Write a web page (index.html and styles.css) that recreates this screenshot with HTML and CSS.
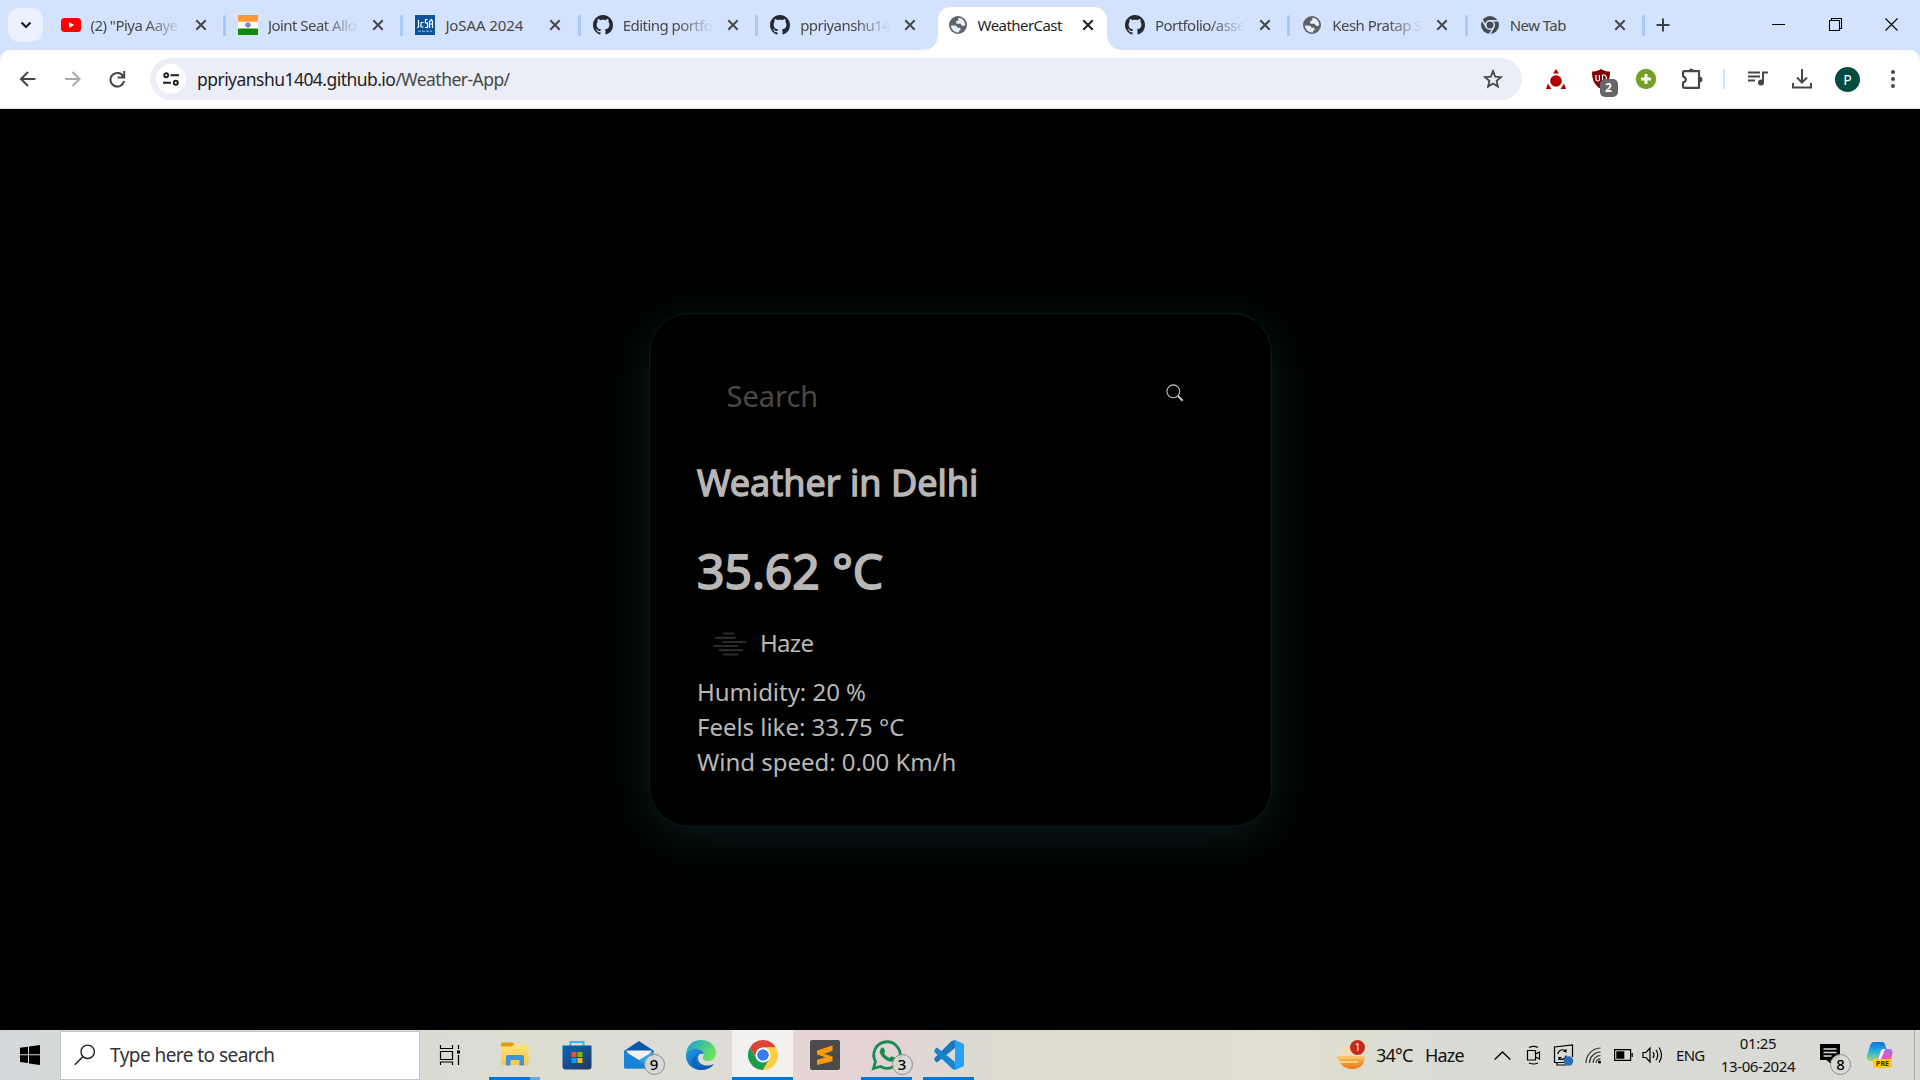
FILE: index.html
```html
<!DOCTYPE html>
<html lang="en">
<head>
<meta charset="utf-8">
<title>WeatherCast</title>
<link rel="stylesheet" href="styles.css">
</head>
<body>
<svg class="defs" width="0" height="0">
  <symbol id="github" viewBox="0 0 16 16"><path d="M8 0C3.58 0 0 3.58 0 8c0 3.54 2.29 6.53 5.47 7.59.4.07.55-.17.55-.38 0-.19-.01-.82-.01-1.49-2.01.37-2.53-.49-2.69-.94-.09-.23-.48-.94-.82-1.13-.28-.15-.68-.52-.01-.53.63-.01 1.08.58 1.23.82.72 1.21 1.87.87 2.33.66.07-.52.28-.87.51-1.07-1.78-.2-3.64-.89-3.64-3.95 0-.87.31-1.59.82-2.15-.08-.2-.36-1.02.08-2.12 0 0 .67-.21 2.2.82.64-.18 1.32-.27 2-.27s1.36.09 2 .27c1.53-1.04 2.2-.82 2.2-.82.44 1.1.16 1.92.08 2.12.51.56.82 1.27.82 2.15 0 3.07-1.87 3.75-3.65 3.95.29.25.54.73.54 1.48 0 1.07-.01 1.93-.01 2.2 0 .21.15.46.55.38A8.01 8.01 0 0 0 16 8c0-4.42-3.58-8-8-8z" fill="#24292f"/></symbol>
  <symbol id="globe" viewBox="0 0 20 20"><circle cx="10" cy="10" r="9" fill="#5f6368"/><path d="M2.800 10.400h3.700q2.700 0 3 2.300h2.300q.7 0 .7 1v1.500q-1.600.2-1.600 1.400v.8A7.300 7.300 0 0 1 2.800 10.400zM10.300 2.800a7.300 7.300 0 0 1 7 7.300q-1.300 1.200-2.900.7-1.600-.7-1.700-2.100H9.600q-1.600 0-1.600-1.500 0-1.400 1.500-1.400.8 0 .8-1z" fill="#e9effa"/></symbol>
  <symbol id="x" viewBox="0 0 12 12"><path d="M1.300 1.300 10.700 10.700M10.700 1.300 1.300 10.700" stroke="currentColor" stroke-width="2" fill="none"/></symbol>
</svg>

<header class="tabstrip">
  <div class="tab-search"><svg width="12" height="8" viewBox="0 0 12 8"><path d="M1.500 1.500 6 6l4.500-4.500" fill="none" stroke="#1f1f1f" stroke-width="2.200"/></svg></div>
  <div class="tabs">
    <div class="tab"><svg class="fav" viewBox="0 0 20 20"><rect y="3" width="20" height="14" rx="3.500" fill="#f00"/><path d="M8 7v6l5.200-3z" fill="#fff"/></svg><span class="title fade">(2) "Piya Aaye</span><svg class="close"><use href="#x"/></svg></div>
    <div class="tab"><svg class="fav" viewBox="0 0 20 20"><path fill="#fff" d="M0 0h20v20H0z"/><path fill="#f93" d="M0 0h20v6.700H0z"/><path fill="#128807" d="M0 13.500h20V20H0z"/><circle cx="10" cy="10" r="2.300" fill="#8b8bd0" stroke="#5c5cb8" stroke-width=".6"/></svg><span class="title fade">Joint Seat Allo</span><svg class="close"><use href="#x"/></svg></div>
    <div class="tab"><svg class="fav" viewBox="0 0 20 20"><path fill="#0f5499" d="M0 0h20v20H0z"/><path d="M3.500 5v7M2 12.500h1.500M6 7.500h2.500M6 7.500v4.500h2.500M12.500 4.500h-2v3.500h2v4.500h-2.500M14.500 13V6.500l2-2 1 2V13M14.500 9h3" fill="none" stroke="#fff" stroke-width="1.200"/><path d="M3 16.200h14" stroke="#9dbfe0" stroke-dasharray="3 1"/></svg><span class="title wide">JoSAA 2024</span><svg class="close"><use href="#x"/></svg></div>
    <div class="tab"><svg class="fav"><use href="#github"/></svg><span class="title fade">Editing portfo</span><svg class="close"><use href="#x"/></svg></div>
    <div class="tab no-sep"><svg class="fav"><use href="#github"/></svg><span class="title fade">ppriyanshu14</span><svg class="close"><use href="#x"/></svg></div>
    <div class="tab active no-sep"><svg class="fav"><use href="#globe"/></svg><span class="title">WeatherCast</span><svg class="close"><use href="#x"/></svg></div>
    <div class="tab"><svg class="fav"><use href="#github"/></svg><span class="title fade">Portfolio/asse</span><svg class="close"><use href="#x"/></svg></div>
    <div class="tab"><svg class="fav"><use href="#globe"/></svg><span class="title fade">Kesh Pratap S</span><svg class="close"><use href="#x"/></svg></div>
    <div class="tab"><svg class="fav" viewBox="0 0 20 20"><circle cx="10" cy="10" r="9" fill="#474b4f"/><circle cx="10" cy="10" r="4.300" fill="none" stroke="#d3e3fd" stroke-width="1.600"/><path d="M10 5.700h8.500M6.300 12.200 2 4.800M13.700 12.200 9.500 19.500" stroke="#d3e3fd" stroke-width="1.600"/></svg><span class="title">New Tab</span><svg class="close"><use href="#x"/></svg></div>
  </div>
  <svg class="new-tab" width="14" height="14" viewBox="0 0 14 14"><path d="M7 .5v13M.5 7h13" stroke="#3c4043" stroke-width="2"/></svg>
  <div class="window-controls">
    <svg width="14" height="14" viewBox="0 0 14 14"><path d="M0 6.500h13" stroke="#000"/></svg>
    <svg width="14" height="14" viewBox="0 0 14 14"><path d="M.5 2.500h10v10H.5zM2.500 2.500v-2h10v10h-2" fill="none" stroke="#000" stroke-width="1.100"/></svg>
    <svg width="14" height="14" viewBox="0 0 14 14"><path d="M.5.5l12 12M12.500.5l-12 12" stroke="#000" stroke-width="1.100"/></svg>
  </div>
</header>

<nav class="toolbar">
  <svg class="nav-btn" viewBox="0 0 20 20"><path d="M17.500 10H3.500M10 3 3 10l7 7" fill="none" stroke="#474747" stroke-width="2"/></svg>
  <svg class="nav-btn" viewBox="0 0 20 20"><path d="M2 10h14M9.500 3l7 7-7 7" fill="none" stroke="#a9a9a9" stroke-width="2"/></svg>
  <svg class="nav-btn" viewBox="0 0 20 20"><path d="M15.500 8A6.800 6.800 0 1 0 16 11.800M16.200 2v6.500h-6.500" fill="none" stroke="#474747" stroke-width="2"/></svg>
  <div class="omnibox">
    <span class="site-info"><svg width="16" height="14" viewBox="0 0 16 14"><g fill="none" stroke="#1f1f1f" stroke-width="1.900"><circle cx="3.200" cy="3.300" r="2"/><circle cx="12.800" cy="10.700" r="2"/><path d="M7.500 3.300H16M0 10.700h8"/></g></svg></span>
    <span class="url">ppriyanshu1404.github.io<span class="path">/Weather-App/</span></span>
    <svg class="star" width="20" height="20" viewBox="0 0 20 20"><path d="M10 2.200l2.200 5.400 5.800.5-4.400 3.800 1.300 5.700-4.900-3-4.900 3 1.300-5.700L2 8.100l5.800-.5z" fill="none" stroke="#474747" stroke-width="1.800"/></svg>
  </div>
  <div class="extensions">
    <svg width="22" height="22" viewBox="0 0 22 22"><circle cx="11" cy="13" r="5.800" fill="#b00000"/><path d="M11 1l3 4.500H8zM1 21l2-5.500L6.500 21zM21 21l-2-5.500-3.500 5.500zM4 13l2.500-5M18 13l-2.500-5" fill="#b00000"/></svg>
    <span class="badged shield"><svg width="20" height="20" viewBox="0 0 20 20"><path d="M10 0c3 2 6 2.500 9 2.500 0 8-2 13.500-9 17.500C3 16 1 10.500 1 2.500 4 2.500 7 2 10 0z" fill="#800000"/><path d="M5 6v4.500q0 1.500 1.700 1.500t1.700-1.500V6M11.500 6v6h1.500q2.500-.5 2.500-3t-2.500-3z" fill="none" stroke="#fff" stroke-width="1.200"/></svg><b class="ext-badge">2</b></span>
    <svg width="22" height="22" viewBox="0 0 22 22"><circle cx="11" cy="11" r="10.200" fill="#75a025"/><path d="M11 6v10M6 11h10" stroke="#fff" stroke-width="3"/></svg>
    <svg class="puzzle" width="22" height="22" viewBox="0 0 22 22"><path d="M3.500 3.200H18v16.600H3q-1 0-1-1v-4.300q2.800-.7 2.800-3T2 8.200V4.700q0-1.500 1.500-1.500z" fill="none" stroke="#474747" stroke-width="2.200" stroke-linejoin="round"/><path d="M7.500 3q.3-2.500 2.700-2.500T13 3zM18.500 8.500q3 .3 3 3t-3 3z" fill="#474747"/></svg>
    <i class="divider"></i>
    <svg width="22" height="22" viewBox="0 0 22 22"><path d="M1 4.500h12M1 8.500h12M1 12.500h7M16 14.500V4.500h5" fill="none" stroke="#474747" stroke-width="2"/><circle cx="14" cy="14.500" r="3" fill="#474747"/></svg>
    <svg width="22" height="22" viewBox="0 0 22 22"><path d="M11 1v13M6 9.500l5 5 5-5M2 15v4.500h18V15" fill="none" stroke="#474747" stroke-width="2"/></svg>
    <span class="avatar">P</span>
    <svg width="6" height="20" viewBox="0 0 6 20"><g fill="#474747"><circle cx="3" cy="3" r="2"/><circle cx="3" cy="10" r="2"/><circle cx="3" cy="17" r="2"/></g></svg>
  </div>
</nav>

<main class="page">
  <section class="card">
    <div class="search"><span class="placeholder">Search</span><svg width="18" height="18" viewBox="0 0 18 18"><circle cx="7.300" cy="7.300" r="6.400" fill="none" stroke="#c4c1bd" stroke-width="1.100"/><path d="M12 12l4.700 4.700" stroke="#c4c1bd" stroke-width="2"/></svg></div>
    <h2 class="city">Weather in Delhi</h2>
    <h1 class="temp">35.62 °C</h1>
    <div class="condition"><svg width="34" height="24" viewBox="0 0 34 24"><path d="M10 1.500h11M2 5.800h21M9.500 10h24M.5 14h24.500M6 18.200h24M9.500 22.500h16" stroke="#2b2b2b" stroke-width="2.200"/></svg><span>Haze</span></div>
    <div class="detail">Humidity: 20 %</div>
    <div class="detail">Feels like: 33.75 °C</div>
    <div class="detail">Wind speed: 0.00 Km/h</div>
  </section>
</main>

<footer class="taskbar">
  <div class="start"><svg width="20" height="20" viewBox="0 0 20 20"><path d="M0 2.800 8 1.700v7.600H0zM9 1.500 20 0v9.300H9zM0 10.300h8v7.700L0 17zM9 10.300h11V20L9 18.400z"/></svg></div>
  <div class="task-search"><svg width="22" height="22" viewBox="0 0 22 22"><circle cx="13.700" cy="7.800" r="6.700" fill="none" stroke="#222" stroke-width="1.400"/><path d="M9 12.500.8 20.700" stroke="#222" stroke-width="1.500"/></svg><span>Type here to search</span></div>
  <div class="apps">
    <div class="app task-view"><svg width="22" height="20" viewBox="0 0 22 20"><path d="M1.500 0v3.500h12V0M1.500 6.500h12v8h-12zM1.500 20v-3h12v3M19.500 0v4M19.500 10v10" fill="none" stroke="#000" stroke-width="1.200"/><path d="M18 5.500h3v3h-3z"/></svg></div>
    <div class="app run-multi"><svg width="30" height="30" viewBox="0 0 30 30"><defs><linearGradient id="fold" x2="0" y2="1"><stop stop-color="#ffe082"/><stop offset="1" stop-color="#ffc83d"/></linearGradient></defs><path d="M1 4q0-1.500 1.500-1.500h10L15 5v6H1z" fill="#dd9e05"/><path d="M1 6.500h10.500l3-2H27q1.500 0 1.500 1.500v19H2.500Q1 25 1 23.500z" fill="url(#fold)"/><path d="M6 25.500V17q0-2 2-2h14q2 0 2 2v8.500h-4.500V20h-9v5.500z" fill="#3f91dc"/></svg></div>
    <div class="app"><svg width="30" height="30" viewBox="0 0 30 30"><defs><linearGradient id="store" x2="1" y2="1"><stop stop-color="#0867ba"/><stop offset="1" stop-color="#24365f"/></linearGradient></defs><path d="M8.500 6V2h13v4" fill="none" stroke="#35b7ee" stroke-width="2"/><path d="M.5 5.500h29v21q0 3-3 3h-23q-3 0-3-3z" fill="url(#store)"/><path d="M9.500 12h5v5h-5z" fill="#f25022"/><path d="M15.500 12h5v5h-5z" fill="#7fba00"/><path d="M9.500 18h5v5h-5z" fill="#00a4ef"/><path d="M15.500 18h5v5h-5z" fill="#ffb900"/></svg></div>
    <div class="app"><span class="badged"><svg width="30" height="30" viewBox="0 0 30 30"><path d="M0 11 15 1l15 10v2H0z" fill="#0a58a8"/><path d="M2 11h26L15 24z" fill="#f2f2f5"/><path d="M0 11l15 9 15-9v16q0 1.500-2 1.500H2Q0 28.500 0 27z" fill="#29a9ea"/><path d="M2 10.500h26l-13 9z" fill="#f2f2f5"/><path d="M0 11l28 17.500H2Q0 28.500 0 27z" fill="#1683d8"/></svg><b class="count">9</b></span></div>
    <div class="app"><svg width="30" height="30" viewBox="0 0 30 30"><defs><linearGradient id="edge1" x2="1" y2=".5"><stop stop-color="#189edb"/><stop offset="1" stop-color="#69e35b"/></linearGradient><linearGradient id="edge2" x2="1" y2="1"><stop stop-color="#1a9be5"/><stop offset="1" stop-color="#104ba5"/></linearGradient></defs><path d="M0 14C1 5 7 0 15 0c9 0 15 6 15 13 0 5-4 8-8 8-4 0-6-2-5-4 2-3 1-8-6-8-6 0-9 2-11 5z" fill="url(#edge1)"/><path d="M0 14c2-4 7-6 11-5 4 0 7 3 7 5-3-1-6 0-6 4 0 6 7 10 16 6-3 4-8 6-13 6C6 30-1 23 0 14z" fill="url(#edge2)"/><path d="M10 16c-2 7 3 13 9 13-7 3-13-2-13-7 0-3 1-5 4-6z" fill="#0c59a4" opacity=".55"/></svg></div>
    <div class="app current"><svg width="30" height="30" viewBox="0 0 30 30"><path d="M2 7.500A15 15 0 0 1 28 7.500H15L8.500 18.700z" fill="#db4437"/><path d="M2 7.500A15 15 0 0 0 15 30l6.500-11.300h-13z" fill="#1e9b4c"/><path d="M28 7.500A15 15 0 0 1 15 30l6.500-11.300L15 7.500z" fill="#ffcd40"/><circle cx="15" cy="15" r="7.500" fill="#fff"/><circle cx="15" cy="15" r="5.800" fill="#397af0"/></svg></div>
    <div class="app"><svg width="30" height="30" viewBox="0 0 30 30"><rect width="30" height="30" rx="2" fill="#4b4b4b"/><path d="M7 10.500 22.500 5.500v5.500L14 13.800l8.500 2.700v4.800L7 25v-5l8.500-2.700L7 14.500z" fill="#ff9b0a"/></svg></div>
    <div class="app running"><span class="badged"><svg width="30" height="30" viewBox="0 0 30 30"><path d="M1.500 28.500l2-7A13.200 13.200 0 1 1 8.500 26.500z" fill="none" stroke="#188c54" stroke-width="2.800"/><path d="M9 8.500q1.500-2 3 0l1 2.500q.3 1-1 2.300 2 3.500 5.500 4.700l1.500-1.500q1-.5 3.500 1 1 .8 0 2.500-2 2.500-6 1.200-6-2.500-8.500-8-.8-2.700 1-4.700z" fill="#188c54"/></svg><b class="count">3</b></span></div>
    <div class="app running"><svg width="30" height="30" viewBox="0 0 30 30"><path d="M21 0v8L3 22.500.5 20.500V18L17.500 1z" fill="#1b78bd"/><path d="M21 30v-8L3 7.500.5 9.500V12L18 28.500z" fill="#1684ce"/><path d="M21 0l8 3.500q1 .5 1 1.500v20q0 1-1 1.500L21 30z" fill="#2aa0f2"/></svg></div>
  </div>
  <div class="tray">
    <span class="badged weather-icon"><svg width="28" height="30" viewBox="0 0 28 30"><defs><linearGradient id="sun" x2="0" y2="1"><stop stop-color="#f9b64a"/><stop offset="1" stop-color="#f0761b"/></linearGradient></defs><path d="M1.500 17h26q0 12-12.500 12-8 0-11.500-6z" fill="url(#sun)"/><path d="M6 8.500h8M6 13h10" stroke="#fbdc9a" stroke-width="2.800" stroke-linecap="round"/><path d="M1 17.500h25" stroke="#f7c46c" stroke-width="2.800" stroke-linecap="round"/><path d="M2 22h18" stroke="#fbd084" stroke-width="2" stroke-linecap="round"/></svg><b class="alert">1</b></span>
    <span class="temp-now">34°C</span><span class="cond-now">Haze</span>
    <svg class="caret" width="17" height="9" viewBox="0 0 17 9"><path d="M.7 8.500 8.500 1l7.800 7.500" fill="none" stroke="#000" stroke-width="1.300"/></svg>
    <svg class="meet" width="16" height="20" viewBox="0 0 16 20"><path d="M1.500 5.500h8v9.500h-8zM9.500 9l4-2v7l-4-2M3 2.500Q8 .2 12 2.500M3 18q5 2 9 0" fill="none" stroke="#000" stroke-width="1.200"/></svg>
    <svg class="sync" width="21" height="22" viewBox="0 0 21 22"><path d="M13 18.500H1.500V3L19.500 1v12M4 18.500V21h9" fill="none" stroke="#000" stroke-width="1.200"/><path d="M5 10a4.500 4.500 0 0 1 8-2.500V5M13 7.500h-2.500M13 11.500A4 4 0 0 1 6 14v2M6 13.500h2.500" fill="none" stroke="#000" stroke-width="1.200"/><circle cx="15.500" cy="17" r="4.800" fill="#2c70b9"/></svg>
    <svg class="wifi" width="16" height="18" viewBox="0 0 16 18"><path d="M1 17A15 15 0 0 1 15.500 2M4.500 17A11 11 0 0 1 15.500 6M8 17A7.500 7.500 0 0 1 15.500 9.500M11 17A4.500 4.500 0 0 1 15.500 12.800" fill="none" stroke="#333" stroke-width="1.200"/><circle cx="14.500" cy="16" r="1.600"/></svg>
    <svg class="battery" width="19" height="12" viewBox="0 0 19 12"><path d="M.6.6h16v10.800H.6zM18.200 4v4" fill="none" stroke="#000" stroke-width="1.200"/><path d="M2.300 2.300h8v7.400h-8z"/></svg>
    <svg class="volume" width="21" height="18" viewBox="0 0 21 18"><path d="M1 6.500h3L8 2v14l-4-4.500H1zM11 6q2 3 0 6M14 3.800q3.500 5.200 0 10.400M17 1.500q5 7.500 0 15" fill="none" stroke="#000" stroke-width="1.200"/></svg>
    <span class="lang">ENG</span>
    <div class="clock"><span class="time">01:25</span><span class="date">13-06-2024</span></div>
    <span class="badged notif"><svg width="20" height="20" viewBox="0 0 20 20"><path d="M0 0h20v16h-9v4l-4.500-4H0z"/><path d="M3.500 5h13M3.500 8.500h13M3.500 12h8" stroke="#dadbd5" stroke-width="1.300"/></svg><b class="count">8</b></span>
    <span class="badged copilot"><svg width="26" height="26" viewBox="0 0 26 26"><defs><linearGradient id="cp1" x2="0" y2="1"><stop stop-color="#176ee1"/><stop offset=".5" stop-color="#23b4dd"/><stop offset="1" stop-color="#b4d45b"/></linearGradient><linearGradient id="cp2" x2="0" y2="1"><stop stop-color="#a56bf0"/><stop offset=".6" stop-color="#ef5c9c"/><stop offset="1" stop-color="#f88c4c"/></linearGradient></defs><path d="M7 0h8q3 0 3.500 4l1 3h-3q-2 0-3 3l-2 6q-1 3-4 3H4q-5 0-4-5L3 4q1-4 4-4z" fill="url(#cp1)"/><path d="M18 7h4q4 0 3.500 4.500L23 21q-1 4-4 4h-7q-3 0-4-4l-1-2q3 0 4-3l2.500-7q.8-2 4.500-2z" fill="url(#cp2)"/><path d="M13.500 10q1-3 3-3h2q-1 1-2 4l-2 5q-1 2-3 2-1.500 0-1.500-1 1 0 1.500-1z" fill="#f1f1f4"/></svg><b class="pre">PRE</b></span>
    <i class="show-desktop"></i>
  </div>
</footer>
</body>
</html>
```
FILE: styles.css
```css
* { box-sizing: border-box; }
body {
  margin: 0;
  width: 1920px;
  height: 1080px;
  overflow: hidden;
  display: flex;
  flex-direction: column;
  background: #000;
  font-family: "Noto Sans", "Open Sans", sans-serif;
}
svg { display: block; flex: none; overflow: visible; }
.defs { position: absolute; }
.badged { position: relative; display: block; flex: none; }

/* tab strip */
.tabstrip {
  height: 50px;
  flex: none;
  display: flex;
  background: #d3e3fd;
}
.tab-search {
  width: 35px;
  height: 34px;
  margin: 8px 0 0 8px;
  border-radius: 12px;
  background: #ebf1fe;
  display: flex;
  align-items: center;
  justify-content: center;
}
.tabs { display: flex; margin-left: 4px; }
.tab {
  position: relative;
  width: 177.4px;
  height: 50px;
  padding-left: 13px;
  display: flex;
  align-items: center;
  color: #474747;
}
.tab::after {
  content: "";
  position: absolute;
  right: -1.500px;
  top: 15px;
  width: 3px;
  height: 21px;
  border-radius: 2px;
  background: #a8c7fa;
}
.tab.no-sep::after { display: none; }
.fav { width: 20px; height: 20px; margin-left: 0.600px; }
.title {
  width: 90px;
  margin-left: 10px;
  font-size: 15px;
  letter-spacing: -0.55px;
  line-height: 20px;
  white-space: nowrap;
  overflow: hidden;
}
.title.wide { letter-spacing: -0.1px; }
.title.fade {
  -webkit-mask-image: linear-gradient(90deg, #000 55px, transparent 90px);
  mask-image: linear-gradient(90deg, #000 55px, transparent 90px);
}
.close { width: 12px; height: 12px; margin-left: 14px; color: #474747; }
.tab.active { color: #1f1f1f; }
.tab.active .close { color: #1f1f1f; }
.tab.active::before {
  content: "";
  position: absolute;
  left: 4px;
  top: 7px;
  width: 169px;
  height: 43px;
  border-radius: 13px 13px 0 0;
  background: #fff;
}
.tab.active::after {
  display: block;
  left: -10px;
  right: auto;
  top: 36px;
  width: 197px;
  height: 14px;
  border-radius: 0;
  background:
    radial-gradient(circle at 0 0, transparent 13.500px, #fff 14px) 0 0 / 14px 14px no-repeat,
    radial-gradient(circle at 100% 0, transparent 13.500px, #fff 14px) 100% 0 / 14px 14px no-repeat;
}
.tab.active > * { position: relative; z-index: 1; }
.new-tab { margin: 18px 0 0 12px; }
.window-controls {
  display: flex;
  gap: 42.500px;
  margin: 18px 21px 0 auto;
}

/* toolbar */
.toolbar {
  height: 59px;
  flex: none;
  display: flex;
  align-items: center;
  padding: 0 24.500px 0 18px;
  background: #fff;
  border-bottom: 1px solid #dcdfe3;
  border-radius: 10px 10px 0 0;
  box-shadow: 0 -10px 0 10px #d3e3fd;
  clip-path: inset(0);
}
.nav-btn { width: 20px; height: 20px; margin-right: 25px; }
.omnibox {
  width: 1372px;
  height: 42px;
  flex: none;
  margin-left: -3px;
  padding: 0 19.500px 0 6px;
  border-radius: 21px;
  background: #ebeef7;
  display: flex;
  align-items: center;
}
.site-info {
  width: 30px;
  height: 30px;
  border-radius: 50%;
  background: #fff;
  display: flex;
  align-items: center;
  justify-content: center;
}
.url {
  flex: 1;
  margin-left: 11px;
  font-size: 17.500px;
  letter-spacing: -0.54px;
  color: #1f1f1f;
}
.url .path { color: #474747; }
.extensions {
  display: flex;
  align-items: center;
  gap: 22px;
  margin-left: 22.500px;
}
.shield { margin: 0 2px; }
.puzzle { margin-left: 2px; }
.ext-badge {
  position: absolute;
  left: 9px;
  top: 10px;
  width: 18px;
  height: 18px;
  border-radius: 5px;
  background: #666;
  color: #fff;
  font-size: 12px;
  line-height: 18px;
  text-align: center;
}
.divider { width: 2px; height: 20px; margin-left: -1.500px; background: #d3e3fd; }
.avatar {
  width: 25px;
  height: 25px;
  margin-right: 7.500px;
  border-radius: 50%;
  background: #004d40;
  color: #fff;
  font-size: 14px;
  line-height: 25px;
  text-align: center;
}

/* page */
.page {
  flex: 1;
  display: flex;
  justify-content: center;
  padding: 204px 0 0 1px;
}
.card {
  width: 623px;
  height: 514px;
  padding: 58px 47px 0;
  border: 1px solid #081d1b;
  border-radius: 40px;
  background: #000;
  color: #b9b7b5;
  box-shadow: 0 10px 50px rgba(14, 52, 50, 0.55);
}
.search {
  display: flex;
  justify-content: space-between;
  height: 48px;
  padding: 0 40px 0 29.500px;
}
.search svg { margin-top: 12px; }
.placeholder { font-size: 29px; line-height: 48px; color: #4b4844; }
.city {
  margin: 38px 0 0;
  font-size: 36px;
  line-height: 50px;
  font-weight: 400;
  -webkit-text-stroke: 1.300px currentColor;
}
.temp {
  margin: 29px 0 0;
  font-size: 48px;
  line-height: 68px;
  font-weight: 400;
  -webkit-text-stroke: 1.800px currentColor;
}
.condition {
  display: flex;
  align-items: center;
  gap: 13px;
  height: 36px;
  margin: 21px 0 12px;
  padding-left: 16px;
  font-size: 24px;
  letter-spacing: -0.7px;
}
.condition span { line-height: 33px; padding-bottom: 3px; }
.detail { font-size: 24px; line-height: 35px; letter-spacing: -0.03px; }

/* taskbar */
.taskbar {
  height: 50px;
  flex: none;
  display: flex;
  color: #111;
  background: linear-gradient(90deg, #d5d8da 0, #dbdbd4 420px, #dddcd0 520px, #dcddd5 700px, #e6d5d5 810px, #e4d3d5 890px, #dddbd1 960px, #dfdecf 1300px, #dadbd5 1450px, #d9dad5 1920px);
}
.start { width: 60px; display: flex; align-items: center; justify-content: center; }
.task-search {
  width: 360px;
  height: 49px;
  margin-top: 0.500px;
  padding-left: 13px;
  border: 1px solid #c6c6c9;
  background: #fff;
  display: flex;
  align-items: center;
  gap: 14px;
  font-size: 19px;
  letter-spacing: -0.55px;
  color: #333;
}
.apps { display: flex; gap: 1px; margin-left: 2px; }
.app {
  width: 61px;
  display: flex;
  align-items: center;
  justify-content: center;
  background-repeat: no-repeat;
  background-position: 50% 100%;
}
.app.task-view { padding-right: 5px; }
.app.running { background-image: linear-gradient(#0078d7, #0078d7); background-size: 51px 3px; }
.app.run-multi { background-image: linear-gradient(90deg, #0078d7 41px, #66aee8 41px); background-size: 51px 3px; }
.app.current { background-color: #f3f1ef; background-image: linear-gradient(#0078d7, #0078d7); background-size: 61px 3px; }
.count {
  position: absolute;
  left: 20px;
  top: 14px;
  width: 21px;
  height: 21px;
  border: 1px solid #8a8a8a;
  border-radius: 50%;
  background: rgba(216, 217, 213, 0.93);
  color: #000;
  font-size: 15px;
  font-weight: 500;
  line-height: 19px;
  text-align: center;
}
.tray {
  flex: 1;
  display: flex;
  align-items: center;
  padding-left: 358px;
  font-size: 18px;
  white-space: nowrap;
}
.alert {
  position: absolute;
  left: 13px;
  top: 0;
  width: 15px;
  height: 15px;
  border-radius: 50%;
  background: #c42b1c;
  color: #fff;
  font-size: 10px;
  font-weight: 400;
  line-height: 15px;
  text-align: center;
}
.temp-now { width: 49px; margin-left: 11px; letter-spacing: -0.8px; }
.cond-now { width: 69px; letter-spacing: -0.8px; }
.meet { margin-left: 15px; }
.sync { margin-left: 11px; }
.wifi { margin-left: 11px; }
.battery { margin-left: 13px; }
.volume { margin-left: 9px; }
.lang { width: 36px; margin-left: 13px; font-size: 15px; letter-spacing: -0.7px; }
.clock {
  width: 92px;
  display: flex;
  flex-direction: column;
  align-items: center;
  font-size: 15px;
  line-height: 23px;
  letter-spacing: -0.4px;
}
.notif { margin: -2px 0 0 16px; }
.notif .count { left: 10px; top: 10px; }
.copilot { margin-left: 27px; }
.pre {
  position: absolute;
  left: 6px;
  top: 17px;
  width: 19px;
  height: 9px;
  border-radius: 2px;
  background: #ffc81e;
  color: #3a2a00;
  font-size: 7px;
  line-height: 9px;
  text-align: center;
}
.show-desktop { width: 1px; height: 50px; margin-left: auto; margin-right: 5px; background: #a9aaa6; }
```
